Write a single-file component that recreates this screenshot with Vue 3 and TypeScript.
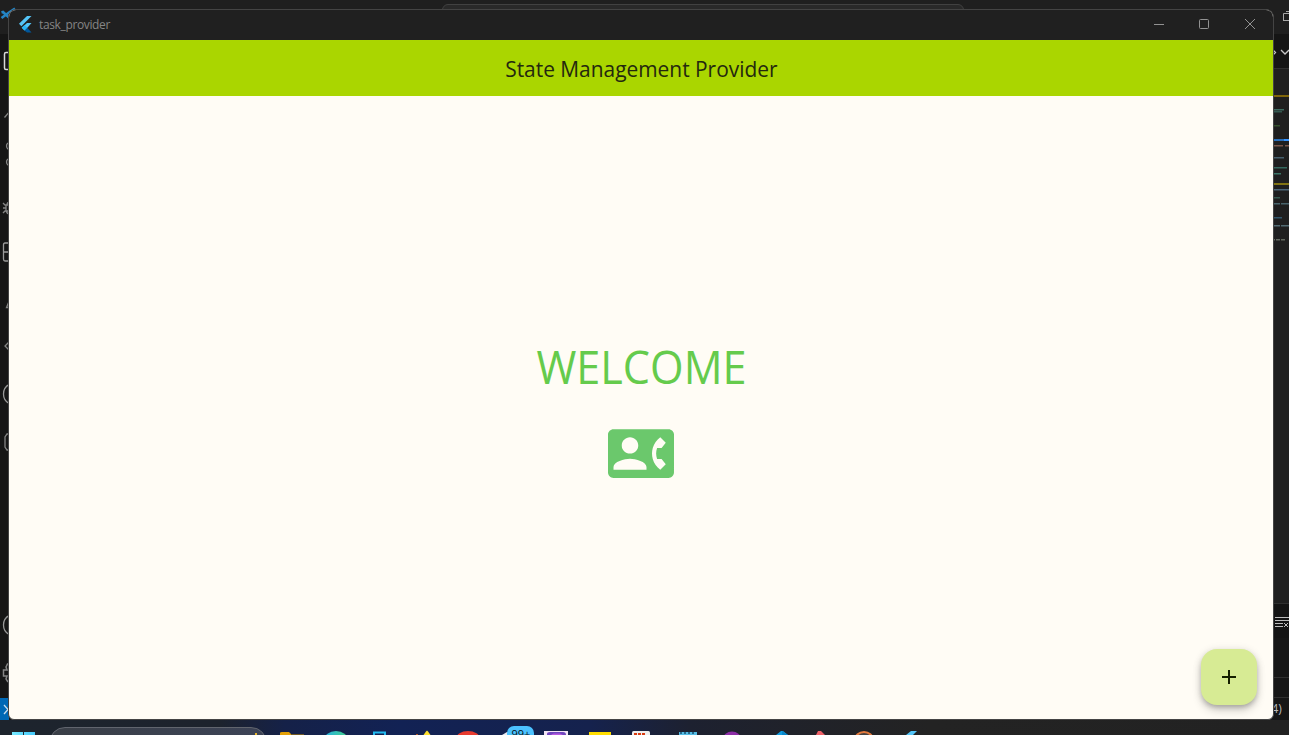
<script setup lang="ts">
interface CodeMark {
  x: number
  y: number
  w: number
  color: string
}

const codeMarks: CodeMark[] = [
  { x: 0, y: 109, w: 11, color: '#3d6b60' },
  { x: 1, y: 111, w: 8, color: '#35584f' },
  { x: 0, y: 125, w: 7, color: '#35502c' },
  { x: 1, y: 145, w: 9, color: '#7a5649' },
  { x: 12, y: 145, w: 4, color: '#7a5649' },
  { x: 1, y: 157, w: 10, color: '#46606e' },
  { x: 0, y: 167, w: 14, color: '#34685e' },
  { x: 0, y: 173, w: 8, color: '#3c7467' },
  { x: 1, y: 189, w: 15, color: '#4c6678' },
  { x: 0, y: 197, w: 7, color: '#34584f' },
  { x: 0, y: 203, w: 7, color: '#49646c' },
  { x: 8, y: 203, w: 8, color: '#49646c' },
  { x: 0, y: 217, w: 9, color: '#31566b' },
  { x: 1, y: 225, w: 6, color: '#526b72' },
  { x: 8, y: 225, w: 8, color: '#526b72' },
  { x: 0, y: 239, w: 2, color: '#62685f' },
  { x: 3, y: 239, w: 4, color: '#62685f' },
  { x: 8, y: 239, w: 4, color: '#62685f' },
]
</script>

<template>
  <div class="desktop">
    <header class="editor-top">
      <svg class="logo" width="18" height="24" viewBox="0 0 18 24">
        <path d="M1.500 12.500 3 12 9 17.500M1.500 18 9 12.500 15 8.500" fill="none" stroke="#2484c4" stroke-width="2.600" />
      </svg>
      <div class="command"><i></i></div>
      <div class="layout-buttons"><i></i><i></i><i></i></div>
    </header>

    <div class="middle">
      <svg class="activity" width="9" height="686" viewBox="0 34 9 686" fill="none" stroke="#858585" stroke-width="1.300">
        <path d="M0 33.500H9" stroke="#2b2b2b" stroke-width="1" />
        <path d="M10 52.500H6Q4.500 52.500 4.500 54V68Q4.500 69.500 6 69.500H10" stroke="#d7d7d7" stroke-width="1.500" />
        <path d="M4.500 117.500 10 111" />
        <circle cx="10" cy="146" r="3.500" />
        <circle cx="10" cy="162" r="3.500" />
        <path d="M3 203 5 205H9M3 208H6M3 213 5 211H9M6 205V211M7 205Q7 202 10 202M6 211Q7 214 10 214" />
        <path d="M10 243H5Q3.500 243 3.500 245V259Q3.500 261 5 261H10M3.500 252H10" stroke="#9a9a9a" />
        <path d="M10 299 6.500 307.500H10" />
        <path d="M10 341 5 346 10 351" />
        <path d="M10 384Q3.500 387 3.500 394T10 404" stroke="#999" />
        <path d="M10 434H7L5 437V447L7 450H10" />
        <path d="M10 615Q3.500 618 3.500 625T10 635" stroke="#999" />
        <path d="M10 664 7.500 664 6 667 7 670H3.500V676H7L6 679 8 682" stroke-width="1.500" />
        <rect x="0" y="698" width="9" height="22" fill="#0068b5" stroke="none" />
        <path d="M4 705 8 709.500 4 714" stroke="#c7dced" />
      </svg>

      <svg class="editor-edge" width="16" height="686" viewBox="0 34 16 686">
        <rect y="34" width="16" height="34" fill="#151515" />
        <path d="M0 33.500H16M0 68.500H16M0 603.500H16M0 677.500H16M0 697.500H16" stroke="#303030" />
        <path d="M0 50 2.500 52.500 0 55M8 50 12 54 16 50" fill="none" stroke="#c8c8c8" stroke-width="1.300" />
        <rect y="95" width="16" height="2" fill="#80660b" />
        <rect x="0" y="139" width="11" height="2" fill="#286eb8" />
        <rect x="11" y="139" width="5" height="2" fill="#3895ff" />
        <rect y="183" width="16" height="2" fill="#817313" />
        <rect
          v-for="(mark, index) in codeMarks"
          :key="index"
          :x="mark.x"
          :y="mark.y"
          :width="mark.w"
          height="1.500"
          :fill="mark.color"
        />
        <rect y="604" width="16" height="34" fill="#141414" />
        <rect y="638" width="16" height="82" fill="#161616" />
        <path d="M0 677.500H16M0 697.500H16" stroke="#303030" />
        <path d="M2 617.500H16M2 620.500H16M2 623.500H10M2 626.500H10M11 623 15 627M15 623 11 627" stroke="#bdbdbd" />
        <text x="-1.500" y="713" class="status-text">4)</text>
      </svg>
    </div>

    <footer class="taskbar">
      <div class="search"></div>
      <svg class="task-icons" width="940" height="15" viewBox="0 720 940 15">
        <defs>
          <linearGradient id="start-blue"><stop stop-color="#77e9ff" /><stop offset="1" stop-color="#43c8fa" /></linearGradient>
          <linearGradient id="edge-blue"><stop stop-color="#26afe3" /><stop offset="1" stop-color="#43d28a" /></linearGradient>
        </defs>
        <path d="M12 732H23V735H12ZM24 732H35V735H24Z" fill="url(#start-blue)" />
        <path d="M255 735V733H257V735Z" fill="#e8b62c" />
        <path d="M280 733Q280 732 282 732H289L291 734H304V735H280Z" fill="#e3a007" />
        <path d="M291 734H304V735H291Z" fill="#725923" />
        <ellipse cx="336" cy="740" rx="12" ry="9" fill="url(#edge-blue)" />
        <path d="M374 735V732.500H385V735" fill="none" stroke="#22b9ef" stroke-width="2" />
        <path d="M423.500 735 426 731.500 427 730.500 428 731.500 430.500 735Z" fill="#ffe02e" />
        <path d="M416 734H418V735H416Z" fill="#b65b29" />
        <ellipse cx="468" cy="739" rx="12" ry="8" fill="#e83b2f" />
        <path d="M502 735 507 732H511V735Z" fill="#ececf2" />
        <rect x="507" y="726" width="27" height="18" rx="7" fill="#4cc2ff" />
        <text x="511.500" y="738" class="badge-text">99+</text>
        <rect x="544" y="731" width="24" height="4" fill="#f3e6f5" />
        <path d="M547 735V734Q547 732 550 732H563Q566 732 566 735Z" fill="#7045be" />
        <path d="M551 735Q552 733.500 554 733.500H560L563 735Z" fill="#b75be0" />
        <rect x="589" y="732" width="22" height="3" fill="#ffdd00" />
        <rect x="632" y="731" width="18" height="8" rx="1.500" fill="#eeeeee" />
        <path d="M634 733H645V735H634Z" fill="#d83a10" />
        <path d="M637.500 733V735M641.500 733V735" stroke="#eee" />
        <rect x="679" y="732" width="18" height="3" fill="#55bce5" />
        <path d="M681 732V734M685 732V734M689 732V734M693 732V734" stroke="#174f70" stroke-width="1.500" />
        <ellipse cx="732" cy="739" rx="9" ry="7.500" fill="#8c2da6" />
        <path d="M776 735 781 731H783L788 735Z" fill="#109be0" />
        <path d="M782 731 788 735H782Z" fill="#0786c9" />
        <path d="M816 735 818 731H821L825 735Z" fill="#ee6168" />
        <ellipse cx="864" cy="740" rx="9" ry="8" fill="#494341" stroke="#e57b3e" stroke-width="2" />
        <path d="M906 735 911 731H917L913 735Z" fill="#54c5f8" />
      </svg>
    </footer>

    <svg class="restore" width="6" height="14" viewBox="0 0 6 14">
      <path d="M3 1.500H6M.5 11V3.500H6M.5 10.500H6" fill="none" stroke="#a8a8a8" />
    </svg>

    <main class="window">
      <header class="titlebar">
        <svg class="flutter" width="14" height="17" viewBox="0 0 14 17">
          <path d="M8 0H12.500L2.400 10.200 0 7.700Z" fill="#54c5f8" />
          <path d="M8 7H12.500L8.300 11.800 5.500 14.600 2.700 11.800Z" fill="#54c5f8" />
          <path d="M5.500 14.600 8.300 11.800 12.500 16.500H8Z" fill="#01579b" />
          <path d="M5.500 9 8.300 11.800 5.500 14.600 2.700 11.800Z" fill="#29b6f6" />
        </svg>
        <span class="app-name">task_provider</span>
        <svg class="controls" width="102" height="12" viewBox="0 0 102 12" fill="none" stroke="#929292">
          <path d="M0 6.500H10" />
          <rect x="45.500" y="1.500" width="9" height="9" rx="1" />
          <path d="M91 1 101 11M101 1 91 11" />
        </svg>
      </header>
      <div class="appbar"><h1>State Management Provider</h1></div>
      <section class="content">
        <p>WELCOME</p>
        <svg class="contact" width="66" height="65" viewBox="0 0 24 24" preserveAspectRatio="none" fill="#6bc86c">
          <path d="M22 3H2C.9 3 0 3.900 0 5v14c0 1.100.9 2 2 2h20c1.100 0 1.990-.9 1.990-2L24 5c0-1.100-.9-2-2-2zM8 6c1.660 0 3 1.340 3 3s-1.340 3-3 3-3-1.340-3-3 1.340-3 3-3zm6 12H2v-1c0-2 4-3.100 6-3.100s6 1.100 6 3.100v1zm3.850-4h1.640L21 16l-1.990 1.990c-1.310-.98-2.280-2.380-2.730-3.990-.18-.64-.28-1.310-.28-2s.1-1.360.28-2c.45-1.620 1.420-3.010 2.730-3.990L21 8l-1.510 2h-1.640c-.22.63-.35 1.300-.35 2s.13 1.370.35 2z" />
        </svg>
        <button class="fab" aria-label="Add">
          <svg width="24" height="24" viewBox="0 0 24 24"><path d="M19 13h-6v6h-2v-6H5v-2h6V5h2v6h6v2z" fill="#151f00" /></svg>
        </button>
      </section>
    </main>
  </div>
</template>

<style>
html,
body {
  margin: 0;
  overflow: hidden;
}
</style>

<style scoped>
.desktop {
  position: relative;
  display: flex;
  flex-direction: column;
  width: 1289px;
  height: 735px;
  overflow: hidden;
  background: #1f1f1f;
  font-family: "Open Sans", "Noto Sans", sans-serif;
}
.editor-top {
  display: flex;
  height: 34px;
  background: #1f1f1f;
}
.logo {
  flex: none;
}
.command {
  box-sizing: border-box;
  width: 522px;
  height: 22px;
  margin: 4px 0 0 424px;
  border: 1px solid #414141;
  border-radius: 6px;
  background: #292929;
}
.command i {
  display: block;
  width: 6px;
  height: 1px;
  margin: 4px 0 0 223px;
  background: #888;
}
.layout-buttons {
  display: flex;
  gap: 12px;
  margin: 9px 0 0 157px;
}
.layout-buttons i {
  width: 14px;
  height: 10px;
  background: #777;
}
.middle {
  display: flex;
  justify-content: space-between;
  height: 686px;
  flex: none;
  background: #181818;
}
.activity {
  background: #161616;
}
.editor-edge {
  background: #1f1f1f;
}
.status-text {
  font: 12px "Open Sans", sans-serif;
  fill: #b8b8b8;
}
.taskbar {
  display: grid;
  height: 15px;
  background: linear-gradient(90deg, #1d242d 0, #1d232d 220px, #152148 285px, #122254 400px, #15224d 590px, #1d2130 690px, #20222a 790px, #232323 930px, #222 1289px);
}
.search,
.task-icons {
  grid-area: 1 / 1;
}
.search {
  box-sizing: border-box;
  width: 218px;
  height: 32px;
  margin: 7px 0 0 49px;
  border: 1px solid #61656e;
  border-radius: 16px;
  background: linear-gradient(90deg, #3a3f47, #3c4356);
}
.badge-text {
  font: 11px "Open Sans", sans-serif;
  fill: #08131b;
}
.restore {
  position: absolute;
  left: 1283px;
  top: 10px;
}
.window {
  position: absolute;
  left: 8px;
  top: 9px;
  box-sizing: border-box;
  display: flex;
  flex-direction: column;
  width: 1266px;
  height: 711px;
  overflow: hidden;
  border: 1px solid #444;
  border-radius: 8px 8px 6px 6px;
  background: #fffcf5;
}
.titlebar {
  display: flex;
  align-items: center;
  height: 30px;
  flex: none;
  background: #202020;
}
.flutter {
  margin: -1px 0 0 10px;
}
.app-name {
  margin-left: 6px;
  color: #858585;
  font-size: 12px;
  line-height: 16px;
  letter-spacing: -.36px;
}
.controls {
  margin: -2px 17px 0 auto;
}
.appbar {
  display: flex;
  align-items: center;
  justify-content: center;
  height: 56px;
  flex: none;
  background: #aad600;
}
h1 {
  margin: 0;
  color: #24280f;
  font-size: 22px;
  font-weight: 400;
  line-height: 28px;
  white-space: nowrap;
  transform: scaleX(.95);
}
.content {
  position: relative;
  display: flex;
  flex: 1;
  flex-direction: column;
  align-items: center;
}
.content p {
  margin: 241px 0 0;
  color: #65cb4c;
  font-size: 45px;
  line-height: 60px;
  transform: scaleX(.96);
}
.contact {
  margin-top: 24px;
}
.fab {
  position: absolute;
  right: 16px;
  bottom: 14px;
  display: grid;
  place-items: center;
  width: 56px;
  height: 56px;
  padding: 0;
  border: 0;
  border-radius: 16px;
  background: #d7eb94;
  box-shadow: 0 3px 5px -1px #0003, 0 6px 10px #00000024, 0 1px 8px #0000001f;
}
</style>
